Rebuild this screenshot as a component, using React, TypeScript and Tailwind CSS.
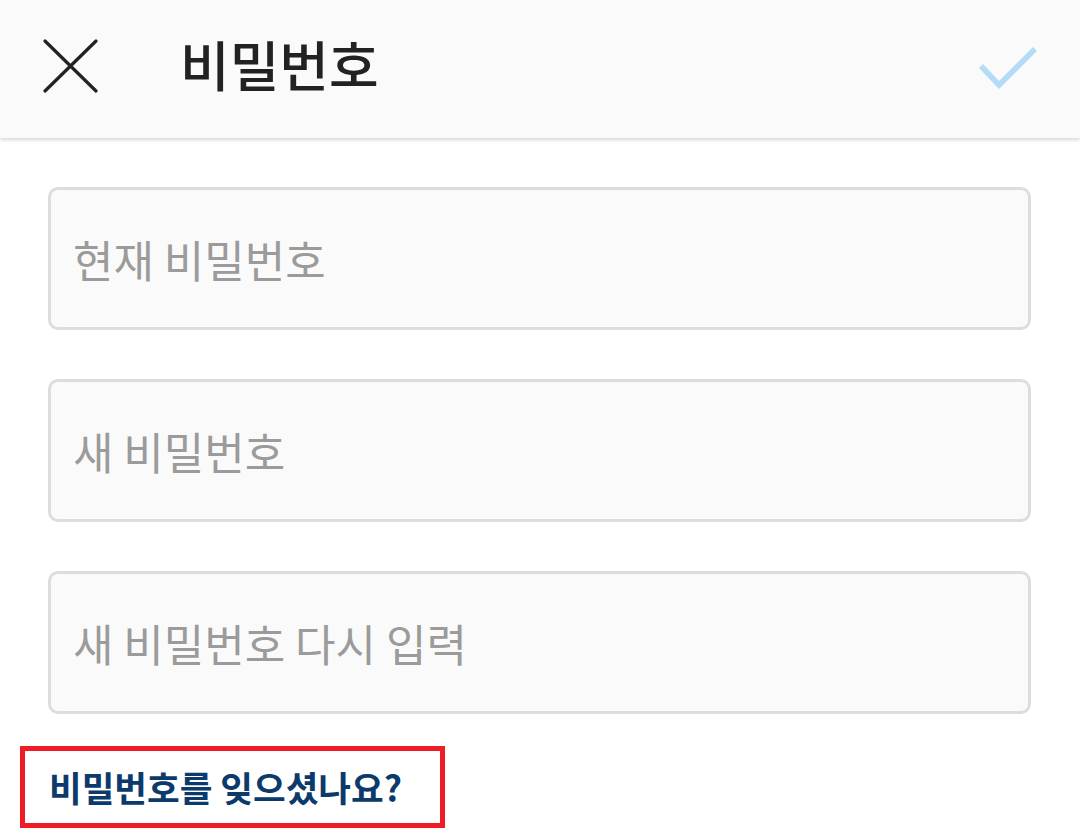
const fields = ['현재 비밀번호', '새 비밀번호', '새 비밀번호 다시 입력'];

export default function App() {
  return (
    <div className="w-[1080px] h-[838px] bg-white overflow-hidden font-['Noto_Sans_CJK_KR','Noto_Sans',sans-serif]">
      {/* top bar */}
      <header className="relative z-10 h-[138px] bg-[#fafafa] flex items-center shadow-[0_2px_4px_rgba(0,0,0,0.16)]">
        <svg width="56" height="56" viewBox="0 0 56 56" className="ml-[42px] -mt-[6px]">
          <path d="M3 3L54 53M54 3L3 53" stroke="#222" strokeWidth="3.2" strokeLinecap="round" fill="none" />
        </svg>
        <h1 className="ml-[82px] -mt-[10px] text-[54px] leading-none font-medium text-[#222]">비밀번호</h1>
        <svg width="64" height="50" viewBox="0 0 64 50" className="ml-auto mr-[40px] -mt-[4px]">
          <path d="M5 24L23 43L59 7" stroke="#b3dcf8" strokeWidth="5.5" fill="none" />
        </svg>
      </header>

      {/* fields */}
      <main className="px-[48px] pt-[49px] flex flex-col gap-[49px]">
        {fields.map((f) => (
          <input
            key={f}
            placeholder={f}
            className="w-[983px] h-[143px] rounded-[10px] border-[3px] border-[#dddddd] bg-[#fafafa] px-[22px] text-[44px] text-[#333] placeholder:text-[#9b9b9b] outline-none"
          />
        ))}
      </main>

      <div className="ml-[20px] mt-[32px] w-[425px] h-[82px] border-[5px] border-[#ee1c25] flex items-center pl-[24px]">
        <span className="text-[35.5px] font-bold text-[#0b3a6b] leading-none">비밀번호를 잊으셨나요?</span>
      </div>
    </div>
  );
}
